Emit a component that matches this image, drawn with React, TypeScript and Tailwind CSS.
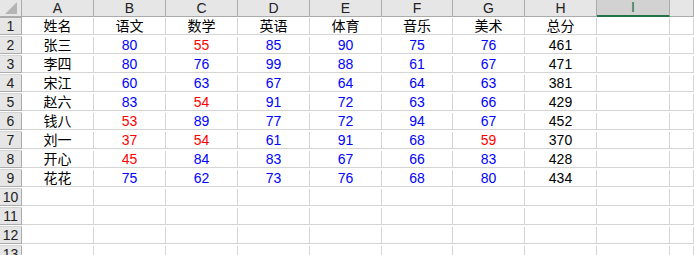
const cols = ["A", "B", "C", "D", "E", "F", "G", "H", "I", ""];

const rows: (string | number)[][] = [
  ["姓名", "语文", "数学", "英语", "体育", "音乐", "美术", "总分"],
  ["张三", 80, 55, 85, 90, 75, 76, 461],
  ["李四", 80, 76, 99, 88, 61, 67, 471],
  ["宋江", 60, 63, 67, 64, 64, 63, 381],
  ["赵六", 83, 54, 91, 72, 63, 66, 429],
  ["钱八", 53, 89, 77, 72, 94, 67, 452],
  ["刘一", 37, 54, 61, 91, 68, 59, 370],
  ["开心", 45, 84, 83, 67, 66, 83, 428],
  ["花花", 75, 62, 73, 76, 68, 80, 434],
];

const gridCols = "grid grid-cols-[22px_72px_72px_72px_72px_72px_71px_72px_72px_73px_1fr]";

function cellColor(v: string | number, ci: number) {
  if (typeof v === "string" || ci === 7) return "text-black";
  return v < 60 ? "text-[#ff0000]" : "text-[#0000ff]";
}

const App: React.FC = () => {
  const body = Array.from({ length: 13 }, (_, i) => rows[i] ?? []);

  return (
    <div className="w-[694px] h-[255px] overflow-hidden bg-white font-['Liberation_Sans','Noto_Sans_CJK_SC',sans-serif] text-[14px] leading-none">
      {/* column headers */}
      <div className={gridCols + " h-[18px]"}>
        <div className="relative bg-[#e6e6e6] border-r border-b border-[#ababab]">
          <svg className="absolute right-[4px] bottom-[2px]" width="12" height="12" viewBox="0 0 12 12">
            <polygon points="12,0 12,12 0,12" fill="#b4b4b4" />
          </svg>
        </div>
        {cols.map((c, i) =>
          c === "I" ? (
            <div key={i} className="flex items-center justify-center bg-[#d2d2d2] border-r border-[#ababab] border-b-2 border-b-[#217346] text-[#217346]">
              {c}
            </div>
          ) : (
            <div key={i} className="flex items-center justify-center bg-[#e6e6e6] border-r border-b border-[#ababab] text-[#222]">
              {c}
            </div>
          )
        )}
        <div className="bg-[#e6e6e6] border-b border-[#ababab]" />
      </div>

      {/* rows */}
      {body.map((r, ri) => (
        <div key={ri} className={gridCols + " h-[19px]"}>
          <div className="flex items-center justify-center bg-[#e6e6e6] border-r border-b border-[#ababab] text-[#222]">
            {ri + 1}
          </div>
          {cols.map((_, ci) => (
            <div
              key={ci}
              className={"flex items-center justify-center border-r border-b border-[#d4d4d4] " + cellColor(r[ci] ?? "", ci)}
            >
              {r[ci] ?? ""}
            </div>
          ))}
          <div className="border-b border-[#d4d4d4]" />
        </div>
      ))}
    </div>
  );
};

export default App;
